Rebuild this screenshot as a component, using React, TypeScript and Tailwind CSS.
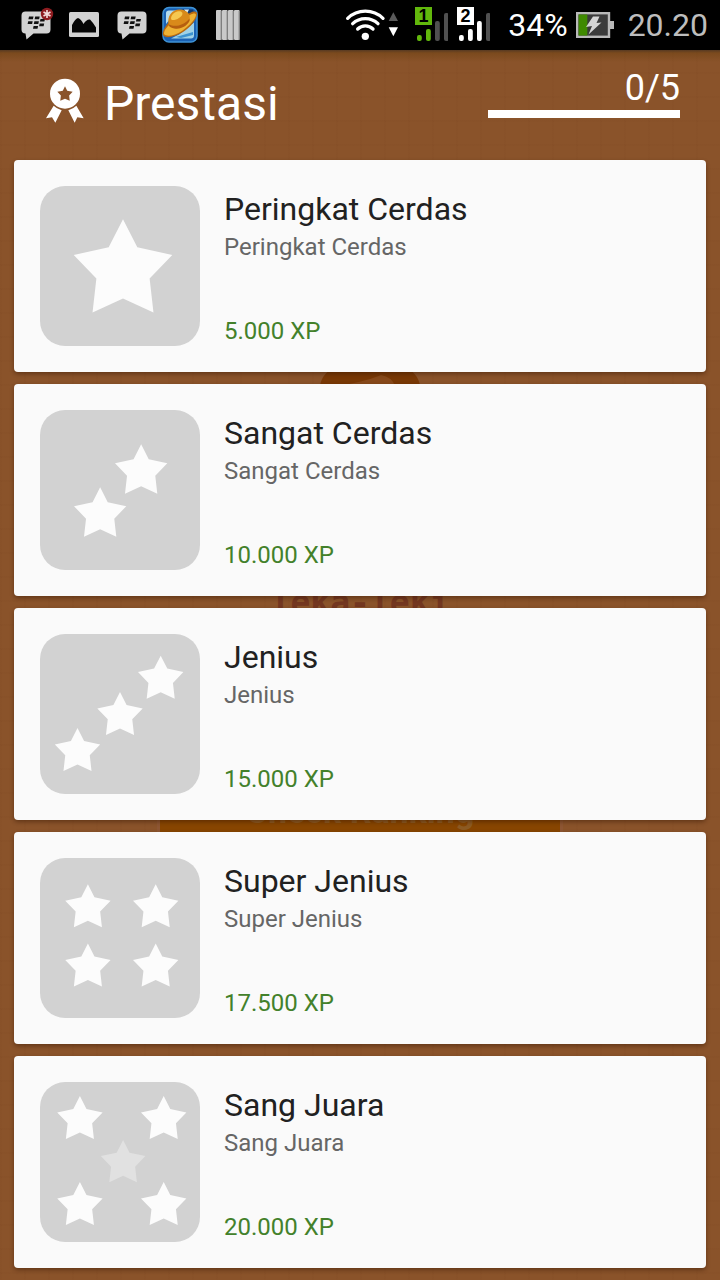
import React from 'react';

interface StarSpec {
  x: number;
  y: number;
  size: number;
  faded?: boolean;
}

interface Achievement {
  title: string;
  description: string;
  xp: string;
  stars: StarSpec[];
}

const achievements: Achievement[] = [
  {
    title: 'Peringkat Cerdas',
    description: 'Peringkat Cerdas',
    xp: '5.000 XP',
    stars: [{ x: 33.7, y: 33.3, size: 98.6 }]
  },
  {
    title: 'Sangat Cerdas',
    description: 'Sangat Cerdas',
    xp: '10.000 XP',
    stars: [
      { x: 75, y: 34.3, size: 52.3 },
      { x: 34, y: 77.3, size: 52.3 }
    ]
  },
  {
    title: 'Jenius',
    description: 'Jenius',
    xp: '15.000 XP',
    stars: [
      { x: 98, y: 21.7, size: 45.4 },
      { x: 57.3, y: 58, size: 45.4 },
      { x: 14.8, y: 94, size: 45.4 }
    ]
  },
  {
    title: 'Super Jenius',
    description: 'Super Jenius',
    xp: '17.500 XP',
    stars: [
      { x: 25.2, y: 26.3, size: 45.4 },
      { x: 93, y: 26.3, size: 45.4 },
      { x: 25.2, y: 85.5, size: 45.4 },
      { x: 93, y: 85.5, size: 45.4 }
    ]
  },
  {
    title: 'Sang Juara',
    description: 'Sang Juara',
    xp: '20.000 XP',
    stars: [
      { x: 17.2, y: 14, size: 45.4 },
      { x: 101, y: 14, size: 45.4 },
      { x: 60.8, y: 58, size: 44.6, faded: true },
      { x: 17.2, y: 100, size: 45.4 },
      { x: 101, y: 100, size: 45.4 }
    ]
  }
];

const STAR_POINTS = '50,0 64.5,28.4 100,36.1 77,60.1 80.9,94.6 50,80.4 19.1,94.6 23,60.1 0,36.1 35.5,28.4';

const ChatIcon = ({ badge = false }: { badge?: boolean }) => (
  <svg className="h-[50px] w-[34px]" viewBox="0 0 34 50" aria-hidden="true">
    <path
      d="M5.500 11.500h21a4 4 0 0 1 4 4v14a4 4 0 0 1-4 4H13.500L6.500 39.500 5.500 33.500a4 4 0 0 1-4-4v-14a4 4 0 0 1 4-4z"
      fill="#d2d2d2"
    />
    <path
      d="M9 16.500h4.500l-.6 2.700H8.400zM15.200 16.500h4.500l-.6 2.700h-4.500zM8.200 21.300h4.500l-.6 2.700H7.600zM14.400 21.300h4.500l-.6 2.700h-4.500zM20.500 18.900H25l-.6 2.700h-4.500zM19.700 23.500h4.500l-.6 2.700h-4.500zM13.600 26h4.500l-.6 2.700H13z"
      fill="#111"
    />
    {badge && (
      <g>
        <circle cx="27" cy="14" r="6.200" fill="#8e1c20" />
        <path d="M27 10v8M23.500 12l7 4M23.500 16l7-4" stroke="#f3dcdc" strokeWidth="1.600" />
      </g>
    )}
  </svg>
);

const PictureIcon = () => (
  <svg className="h-[50px] w-[38px]" viewBox="0 0 38 50" aria-hidden="true">
    <rect x="3" y="12" width="30" height="25" rx="1.500" fill="#d2d2d2" />
    <path d="M6 32.500V25q3-6 6-7 3 1 5.500 6 3-5 6.500-4.500 3 3 6 8v5z" fill="#050505" />
  </svg>
);

const HatIcon = () => (
  <svg className="h-[50px] w-9" viewBox="0 0 36 50" aria-hidden="true">
    <rect x="1" y="7.500" width="34" height="34.500" rx="6" fill="#1b62b4" stroke="#3f93d6" strokeWidth="1.500" />
    <path d="M4 13q0-2.500 3-2.500h8L4 24z" fill="#b5dcec" />
    <path d="M20 9.500h11l1 3-6 2z" fill="#10396f" />
    <path d="M22 9.500l5 0-2 4z" fill="#d8ecf6" />
    <path d="M9 38.500l8-4 15-12v13q0 3-3 3z" fill="#9fd2e6" />
    <path d="M14 37l17-5v3l-12 3z" fill="#3d93cf" />
    <path d="M1 35C0 31 4 25 8 21l20-8c4-2 7-2 7 1 0 5-6 13-14 18S3 39 1 35z" fill="#b96a10" />
    <path d="M2 34C2 30 5 27 8 24l20-9c3-2 6-2 6 0-1 5-7 11-14 16S4 37 2 34z" fill="#eeb234" />
    <path d="M7 25C4 16 11 9 18 9.500c7 0 11 5 9.500 11C24 29 12 31 7 25z" fill="#d98a1a" />
    <path d="M9 18c1-5 6-7.500 10-6.500 4 2-1 7-5 8-3 1-5 1-5-1.500z" fill="#f6c850" />
    <path d="M7 24.500c6 3 15 1 20.500-6v2.500C23 29 12 31 7 26z" fill="#b55f10" />
  </svg>
);

const BarsIcon = () => (
  <svg className="h-[50px] w-8" viewBox="0 0 32 50" aria-hidden="true">
    {[6, 12, 18, 24].map((x) => (
      <g key={x}>
        <rect x={x} y="10" width="5.600" height="30" rx="1" fill="#c9c9c9" />
        <rect x={x + 4.6} y="11" width="1" height="29" fill="#858585" />
      </g>
    ))}
  </svg>
);

const WifiIcon = () => (
  <svg className="h-[50px] w-[62px]" viewBox="13 0 186 150" role="img" aria-label="Wi-Fi">
    <circle cx="77" cy="109" r="11" fill="#fff" />
    <g fill="none" stroke="#fff" strokeWidth="10" strokeLinecap="round">
      <path d="M24 55a76 76 0 0 1 106 0" />
      <path d="M39 71a55 55 0 0 1 76 0" />
      <path d="M54 87a33 33 0 0 1 46 0" />
    </g>
    <path d="M147 63h28l-14-26z" fill="#5a5a5a" />
    <path d="M147 82h28l-14 27z" fill="#fff" />
  </svg>
);

const SignalIcon = ({ sim, color, level }: { sim: string; color: string; level: number }) => (
  <svg className="h-[50px] w-[34px]" viewBox="-1 0 34 50" role="img" aria-label={`SIM ${sim}`}>
    <rect x="0" y="7" width="17" height="18" fill={color} />
    <text x="8.500" y="22" textAnchor="middle" fontFamily="Liberation Sans, sans-serif" fontWeight="700" fontSize="18" fill="#000">
      {sim}
    </text>
    {[6, 12, 20, 28].map((h, i) => (
      <rect key={h} x={2 + i * 9} y={41 - h} width="4.800" height={h} rx="2" fill={i < level ? color : '#505050'} />
    ))}
  </svg>
);

const BatteryIcon = () => (
  <svg className="h-[50px] w-10" viewBox="0 0 40 50" role="img" aria-label="Mengisi daya">
    <rect x="1.200" y="13.200" width="31.800" height="23.600" fill="#3b3b3b" stroke="#b9b9b9" strokeWidth="2.400" />
    <rect x="34" y="21" width="4" height="8" fill="#b9b9b9" />
    <rect x="2.600" y="14.500" width="8.700" height="21" fill="#3f8a00" />
    <path d="M17 16.500h6.500l-3 6.500 5-.500L12.500 34.500l3.500-8.500-6 1z" fill="#d4d4d4" />
  </svg>
);

const MedalIcon = () => (
  <svg className="h-[52px] w-10 shrink-0" viewBox="132 84 120 156" aria-hidden="true">
    <circle cx="195" cy="131" r="45" fill="#fff" />
    <g transform="translate(172 109) scale(.46)">
      <polygon points={STAR_POINTS} fill="#8a532a" />
    </g>
    <path d="M161 167q9 9 24 14l-19 37-10-16-18 3zM229 167q-9 9-24 14l19 37 8-16 19 3z" fill="#fff" />
  </svg>
);

const StatusBar = () => (
  <div className="flex h-[50px] items-center justify-between bg-black pl-5 pr-3 text-[32px] leading-[50px]">
    <div className="flex items-center gap-3">
      <ChatIcon badge />
      <PictureIcon />
      <ChatIcon />
      <HatIcon />
      <BarsIcon />
    </div>
    <div className="flex items-center gap-2">
      <WifiIcon />
      <SignalIcon sim="1" color="#62b80c" level={2} />
      <SignalIcon sim="2" color="#ffffff" level={3} />
      <span className="ml-2.5 text-white">34%</span>
      <BatteryIcon />
      <time className="ml-1 text-[#bdbdbd]">20.20</time>
    </div>
  </div>
);

// Start screen that stays visible between the cards
const Backdrop = () => (
  <div
    aria-hidden="true"
    className="absolute inset-0 flex flex-col items-center overflow-hidden bg-[#8a532a] bg-[linear-gradient(rgba(70,30,0,0.025)_2px,transparent_2px),linear-gradient(90deg,rgba(70,30,0,0.025)_2px,transparent_2px)] bg-[size:24px_24px] pt-[310px]"
  >
    <svg className="h-[273px] w-[120px] shrink-0" viewBox="0 0 120 273">
      <path d="M20 76C24 40 116 40 120 76V130H20z" fill="#783805" />
      <path d="M40 76Q70 70 81 65Q92 67 95 76V120H40z" fill="#87491a" />
    </svg>
    <p className="font-['DejaVu_Sans_Mono',monospace] text-[33px] font-bold leading-10 text-[#733720]">Teka-Teki</p>
    <div className="mt-[148px] h-20 w-[406px] shrink-0 border-x-[3px] border-[#8d5633] bg-[#874500] text-center text-[34px] font-bold leading-20 text-[#8c5a22]">
      Check Ranking
    </div>
  </div>
);

const AchievementCard = ({ item }: { item: Achievement }) => (
  <li className="flex gap-6 rounded bg-[#fafafa] p-[26px] shadow-[0_2px_4px_rgba(50,20,0,0.45)]">
    <svg className="size-40 shrink-0" viewBox="0 0 160 160" aria-hidden="true">
      <rect width="160" height="160" rx="25" fill="#d2d2d2" />
      {item.stars.map((s) => (
        <g key={`${s.x}-${s.y}`} transform={`translate(${s.x} ${s.y}) scale(${s.size / 100})`}>
          <polygon points={STAR_POINTS} fill={s.faded ? '#e1e1e1' : '#fcfcfc'} />
        </g>
      ))}
    </svg>
    <div className="flex min-w-0 flex-col text-2xl leading-[30px]">
      <h2 className="text-[32px] leading-[46px] text-[#212121]">{item.title}</h2>
      <p className="text-[#666666]">{item.description}</p>
      <p className="mt-auto text-[#43812b]">{item.xp}</p>
    </div>
  </li>
);

const App: React.FC = () => {
  const unlocked = 0;

  return (
    <div className="relative isolate flex min-h-screen flex-col font-[Roboto,sans-serif]">
      <StatusBar />
      <div className="relative flex-1">
        <div className="absolute inset-x-0 -top-[50px] bottom-0 -z-10">
          <Backdrop />
        </div>
        <header className="flex h-[110px] items-start justify-between bg-[linear-gradient(rgba(60,45,30,0.65),rgba(100,60,10,0.4)_3px,transparent_12px)] pl-11 pr-10 pt-4 text-white">
          <div className="flex items-center gap-5">
            <MedalIcon />
            <h1 className="text-5xl leading-[76px]">Prestasi</h1>
          </div>
          <div className="w-48">
            <p className="text-right text-4xl leading-11">
              {unlocked}/{achievements.length}
            </p>
            <div
              role="progressbar"
              aria-label="Prestasi"
              aria-valuemin={0}
              aria-valuemax={achievements.length}
              aria-valuenow={unlocked}
              className="h-2 bg-white"
            />
          </div>
        </header>
        <ul className="flex flex-col gap-3 px-3.5 pb-3">
          {achievements.map((item) => (
            <AchievementCard key={item.title} item={item} />
          ))}
        </ul>
      </div>
    </div>
  );
};

export default App;
